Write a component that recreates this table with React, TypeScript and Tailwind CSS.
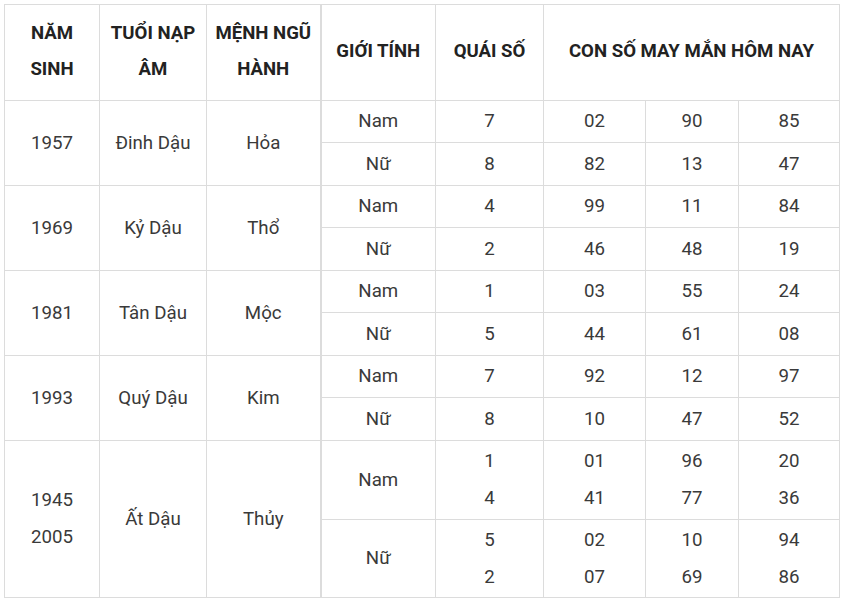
import { Fragment } from 'react';

const rows: {
  year: string[];
  tuoi: string;
  menh: string;
  nam: { q: string[]; n: string[][] };
  nu: { q: string[]; n: string[][] };
  h: [string, string];
}[] = [
  { year: ['1957'], tuoi: 'Đinh Dậu', menh: 'Hỏa', nam: { q: ['7'], n: [['02'], ['90'], ['85']] }, nu: { q: ['8'], n: [['82'], ['13'], ['47']] }, h: ['h-[42px]', 'h-[43px]'] },
  { year: ['1969'], tuoi: 'Kỷ Dậu', menh: 'Thổ', nam: { q: ['4'], n: [['99'], ['11'], ['84']] }, nu: { q: ['2'], n: [['46'], ['48'], ['19']] }, h: ['h-[42px]', 'h-[43px]'] },
  { year: ['1981'], tuoi: 'Tân Dậu', menh: 'Mộc', nam: { q: ['1'], n: [['03'], ['55'], ['24']] }, nu: { q: ['5'], n: [['44'], ['61'], ['08']] }, h: ['h-[42px]', 'h-[43px]'] },
  { year: ['1993'], tuoi: 'Quý Dậu', menh: 'Kim', nam: { q: ['7'], n: [['92'], ['12'], ['97']] }, nu: { q: ['8'], n: [['10'], ['47'], ['52']] }, h: ['h-[42px]', 'h-[43px]'] },
  { year: ['1945', '2005'], tuoi: 'Ất Dậu', menh: 'Thủy', nam: { q: ['1', '4'], n: [['01', '41'], ['96', '77'], ['20', '36']] }, nu: { q: ['5', '2'], n: [['02', '07'], ['10', '69'], ['94', '86']] }, h: ['h-[79px]', 'h-[78px]'] },
];

const td = 'border border-[#dcdcdc] text-center align-middle p-0';

function Lines({ items }: { items: string[] }) {
  return (
    <>
      {items.map((t, i) => (
        <div key={i} className="leading-[37px]">{t}</div>
      ))}
    </>
  );
}

export default function App() {
  return (
    <div className="min-h-screen bg-white pt-[4px] pl-[4px]" style={{ fontFamily: 'Roboto, "Noto Sans", sans-serif' }}>
      <table className="table-fixed border-collapse w-[835px] text-[18.7px] text-[#3a3a3a]">
        <colgroup>
          <col className="w-[95px]" />
          <col className="w-[107px]" />
          <col className="w-[114px]" />
          <col className="w-[115px]" />
          <col className="w-[108px]" />
          <col className="w-[102px]" />
          <col className="w-[93px]" />
          <col className="w-[101px]" />
        </colgroup>
        <thead>
          <tr className="h-[96px] font-bold text-[#222] text-[18.6px] leading-[36px]">
            <th className={`${td} pb-[3px]`}>NĂM<br />SINH</th>
            <th className={`${td} pb-[3px]`}>TUỔI NẠP<br />ÂM</th>
            <th className={`${td} pb-[3px]`}>MỆNH NGŨ<br />HÀNH</th>
            <th className={`${td} border-l-2 pb-[3px]`}>GIỚI TÍNH</th>
            <th className={`${td} pb-[3px]`}>QUÁI SỐ</th>
            <th className={`${td} pb-[3px]`} colSpan={3}>CON SỐ MAY MẮN HÔM NAY</th>
          </tr>
        </thead>
        <tbody>
          {rows.map((r) => (
            <Fragment key={r.tuoi}>
              <tr className={r.h[0]}>
                <td className={td} rowSpan={2}><Lines items={r.year} /></td>
                <td className={td} rowSpan={2}>{r.tuoi}</td>
                <td className={td} rowSpan={2}>{r.menh}</td>
                <td className={`${td} border-l-2`}>Nam</td>
                <td className={td}><Lines items={r.nam.q} /></td>
                {r.nam.n.map((c, i) => (
                  <td key={i} className={td}><Lines items={c} /></td>
                ))}
              </tr>
              <tr className={r.h[1]}>
                <td className={`${td} border-l-2`}>Nữ</td>
                <td className={td}><Lines items={r.nu.q} /></td>
                {r.nu.n.map((c, i) => (
                  <td key={i} className={td}><Lines items={c} /></td>
                ))}
              </tr>
            </Fragment>
          ))}
        </tbody>
      </table>
    </div>
  );
}
